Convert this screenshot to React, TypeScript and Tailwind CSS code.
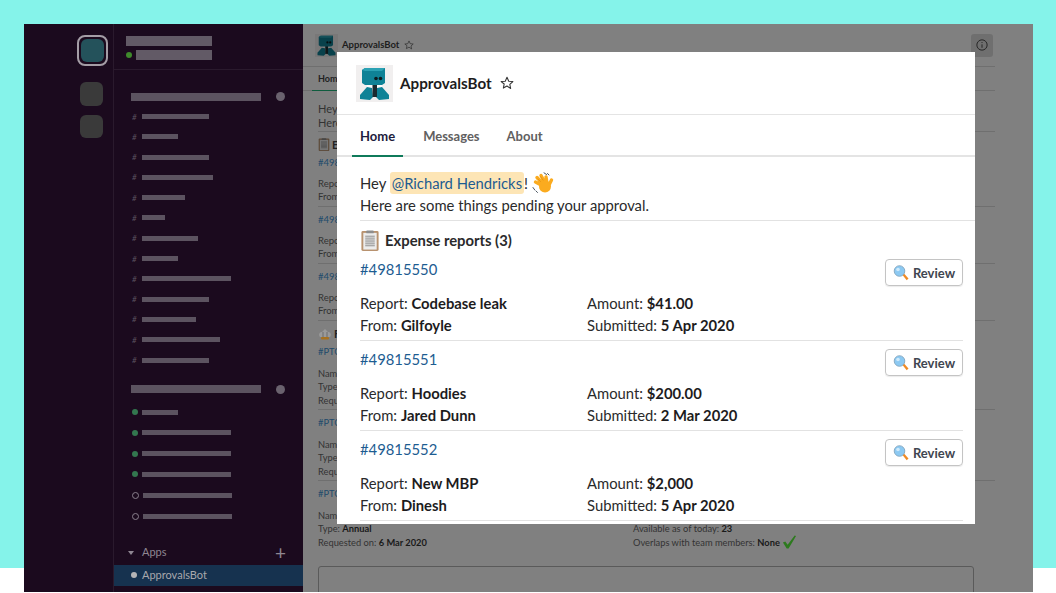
const channelWidths = [67, 36, 67, 71, 43, 23, 56, 36, 89, 67, 54, 78, 67]
const dmRows = [
  { width: 36, online: true },
  { width: 89, online: true },
  { width: 89, online: true },
  { width: 89, online: true },
  { width: 89, online: false },
  { width: 89, online: false },
]

const reports = [
  { id: "#49815550", report: "Codebase leak", from: "Gilfoyle", amount: "$41.00", date: "5 Apr 2020" },
  { id: "#49815551", report: "Hoodies", from: "Jared Dunn", amount: "$200.00", date: "2 Mar 2020" },
  { id: "#49815552", report: "New MBP", from: "Dinesh", amount: "$2,000", date: "5 Apr 2020" },
]

function BotAvatar({ className }: { className: string }) {
  return (
    <svg viewBox="0 0 37 37" className={className}>
      <rect width="37" height="37" fill="#f1efef" />
      <path d="M11 17h15v9H11z" fill="#fbfbfb" />
      <path d="M11 22l5 1 1 9-3 3-10-1 0-4z" fill="#0f8296" />
      <path d="M26 22l-5 1-1 9 3 3 10-1 0-4z" fill="#0f8296" />
      <rect x="16.500" y="18" width="4.500" height="14" fill="#1b2b30" />
      <path d="M6 5l3-2 20 0 0 15-3 2-17 0-3-2z" fill="#0f8296" />
      <path d="M6 5l3-2 20 0-3 3-17 0z" fill="#2ba2b4" />
      <circle cx="20" cy="13.500" r="1.800" fill="#0c1a1e" />
      <circle cx="24.500" cy="13.500" r="1.800" fill="#0c1a1e" />
    </svg>
  )
}

function Star({ className }: { className: string }) {
  return (
    <svg viewBox="0 0 16 16" fill="none" stroke="currentColor" strokeWidth="1.2" strokeLinejoin="round" className={className}>
      <path d="M8 1.500l2 4.400 4.700.5-3.500 3.200 1 4.700L8 11.400l-4.200 2.400 1-4.700L1.300 6.400l4.700-.5z" />
    </svg>
  )
}

function Clipboard({ className }: { className: string }) {
  return (
    <svg viewBox="0 0 20 22" className={className}>
      <rect x="1" y="1" width="18" height="21" rx="1.500" fill="#b8926f" />
      <rect x="3" y="3" width="14" height="17.500" fill="#ececec" />
      <rect x="6" y="0.500" width="8" height="3" rx="1" fill="#8d8d8d" />
      <path d="M5 6.500h10M5 8.500h10M5 10.500h10M5 12.500h10M5 14.500h10M5 16.500h10" stroke="#8a8a8a" strokeWidth="1" />
    </svg>
  )
}

function Crown({ className }: { className: string }) {
  return (
    <svg viewBox="0 0 14 14" className={className}>
      <path d="M2 10c-2-3 0-5 2-5l3-3 3 3c2 0 4 2 2 5z" fill="#9a9a9a" />
      <path d="M5 5v5M9 5v5" stroke="#6d6d6d" strokeWidth="1" />
      <rect x="3" y="10" width="8" height="2.500" rx="1" fill="#a8721f" />
    </svg>
  )
}

function WaveHand({ className }: { className: string }) {
  return (
    <svg viewBox="0 0 22 22" fill="none" strokeLinecap="round" className={className}>
      <g stroke="#fbab1f" strokeWidth="3.400">
        <path d="M11 14L3.500 10M11 12L5 5.500M13 11L9 3.500M15 11l-1-6M17 13l2.500-5" />
      </g>
      <circle cx="13" cy="14.500" r="6" fill="#fbab1f" />
      <path d="M8.500 9.500L6 7M11 8L8.500 4.500" stroke="#e08e10" strokeWidth="0.700" />
      <path d="M12 0.800l2.500 1.700M15.500 1.500l1.500 1.500M1 15.500l1.800 2.500M4 19l1.500 1.500" stroke="#4a5560" strokeWidth="1" />
    </svg>
  )
}

function Magnifier({ className }: { className: string }) {
  return (
    <svg viewBox="0 0 16 16" className={className}>
      <path d="M9.500 10l1.500-1.500 4.500 5-1.800 1.800z" fill="#f08a24" />
      <circle cx="6.500" cy="6" r="5.300" fill="#8cc9f2" stroke="#7d9fb8" strokeWidth="0.800" />
      <circle cx="5" cy="4.500" r="1.800" fill="#cfeafb" />
    </svg>
  )
}

function DimmedReportRows() {
  return (
    <>
      {[0, 1, 2].map((i) => (
        <div key={i} className="h-[57px] border-b border-[#6f6f6f] pt-[6px] text-[9.500px] leading-[13.500px] text-[#333]">
          <div className="text-[#1e4a6b]">#498</div>
          <div className="mt-[7px]">Repo</div>
          <div>From</div>
        </div>
      ))}
    </>
  )
}

function DimmedPtoRow() {
  return (
    <div className="h-[71px] border-b border-[#6f6f6f] pt-[6px] text-[9.300px] leading-[13.500px] text-[#333]">
      <div className="text-[#1e4a6b]">#PTO</div>
      <div className="mt-[8px]">Nam</div>
      <div>Type</div>
      <div>Requ</div>
    </div>
  )
}

export default function App() {
  return (
    <div className="relative h-[593px] w-[1056px] overflow-hidden bg-white font-['Lato','Liberation_Sans',sans-serif]">
      <div className="absolute inset-x-0 top-0 h-[568px] bg-[#85f3ea]" />

      {/* Slack window, dimmed */}
      <div className="relative ml-[24px] mt-[24px] flex h-[568px] w-[1009px]">
        <div className="flex w-[89px] shrink-0 flex-col items-end bg-[#1b0a1e] pr-[5px] pt-[11px]">
          <div className="rounded-[8px] border-2 border-[#a49da6] p-[2px]">
            <div className="h-[23px] w-[23px] rounded-[6px] bg-[#24525b]" />
          </div>
          <div className="mr-[5px] mt-[16px] h-[24px] w-[23px] rounded-[6px] bg-[#3a3a3a]" />
          <div className="mr-[5px] mt-[9px] h-[23px] w-[23px] rounded-[6px] bg-[#3a3a3a]" />
        </div>

        <aside className="flex w-[190px] shrink-0 flex-col overflow-hidden border-l border-[#2a1a2d] bg-[#1b0a1e]">
          <div className="h-[46px] shrink-0 border-b border-[#2a1a2d] pl-[12px] pt-[12px]">
            <div className="h-[10px] w-[86px] bg-[#625a66]" />
            <div className="mt-[4px] flex items-center gap-[4px]">
              <span className="h-[6px] w-[6px] rounded-full bg-[#3f8a2c]" />
              <div className="h-[10px] w-[76px] bg-[#625a66]" />
            </div>
          </div>

          <div className="mt-[22px] flex items-center pl-[17px]">
            <div className="h-[8px] w-[130px] bg-[#5c5360]" />
            <span className="ml-[15px] h-[9px] w-[9px] rounded-full bg-[#6a626e]" />
          </div>
          <div className="mt-[13px] flex flex-col gap-[15.300px] pl-[18px]">
            {channelWidths.map((w, i) => (
              <div key={i} className="flex h-[5px] items-center gap-[5px]">
                <span className="w-[5px] text-[8px] italic leading-none text-[#5c5360]">#</span>
                <div className="h-[5px] bg-[#5c5360]" style={{ width: w }} />
              </div>
            ))}
          </div>

          <div className="mt-[22px] flex items-center pl-[17px]">
            <div className="h-[8px] w-[130px] bg-[#5c5360]" />
            <span className="ml-[15px] h-[9px] w-[9px] rounded-full bg-[#6a626e]" />
          </div>
          <div className="mt-[16px] flex flex-col gap-[15.800px] pl-[18px]">
            {dmRows.map((row, i) => (
              <div key={i} className="flex h-[5px] items-center gap-[4px]">
                {row.online ? (
                  <span className="h-[6px] w-[6px] rounded-full bg-[#33774f]" />
                ) : (
                  <span className="h-[7px] w-[7px] rounded-full border border-[#8a808d]" />
                )}
                <div className="h-[5px] bg-[#5c5360]" style={{ width: row.width }} />
              </div>
            ))}
          </div>

          <div className="mt-[26px] flex h-[16px] items-center pl-[14px] pr-[17px] text-[11px] text-[#8f8792]">
            <span className="h-0 w-0 border-x-[3px] border-t-[4px] border-x-transparent border-t-[#8f8792]" />
            <span className="ml-[8px]">Apps</span>
            <span className="ml-auto text-[19px] font-normal leading-none">+</span>
          </div>
          <div className="mt-[4px] flex h-[21px] shrink-0 items-center bg-[#16324f] pl-[17px] text-[11px] text-[#a8a8ac]">
            <span className="h-[6px] w-[6px] rounded-full bg-[#b4b4b6]" />
            <span className="ml-[5px]">ApprovalsBot</span>
          </div>
        </aside>

        <main className="min-w-0 flex-1 overflow-hidden bg-[#808080]">
          <div className="w-[692px]">
            <div className="flex h-[43px] items-center justify-between border-b border-[#6f6f6f] pl-[12px] pr-[2px]">
              <div className="flex items-center gap-[4px]">
                <BotAvatar className="h-[23px] w-[23px] brightness-50" />
                <span className="text-[9.500px] font-bold text-[#1d1d1d]">ApprovalsBot</span>
                <Star className="ml-[1px] h-[10px] w-[10px] text-[#333]" />
              </div>
              <div className="flex h-[23px] w-[22px] items-center justify-center rounded-[3px] bg-[#6f6f6f]">
                <svg viewBox="0 0 14 14" fill="none" stroke="#222" strokeWidth="1.100" className="h-[12px] w-[12px]">
                  <circle cx="7" cy="7" r="6" />
                  <path d="M7 6.200v4M7 3.600v1.100" />
                </svg>
              </div>
            </div>

            <div className="flex h-[24px] border-b border-[#6f6f6f] pl-[9px]">
              <div className="h-[24px] border-b border-[#0f5c3e] px-[6px] pt-[5px] text-[9px] font-bold text-[#222]">Home</div>
            </div>

            <div className="pl-[15px]">
              <div className="h-[41px] border-b border-[#6f6f6f] pt-[11px] text-[11px] leading-[14px] text-[#333]">
                <div>Hey</div>
                <div>Here</div>
              </div>
              <div className="flex h-[18px] items-start gap-[2px] pt-[6px] text-[11px] font-bold leading-[14px] text-[#222]">
                <Clipboard className="h-[13px] w-[12px] brightness-50" />
                <span>E</span>
              </div>
              <DimmedReportRows />
              <div className="flex h-[18px] items-start gap-[2px] pt-[6px] text-[11px] font-bold leading-[14px] text-[#222]">
                <Crown className="h-[14px] w-[14px]" />
                <span>F</span>
              </div>
              <DimmedPtoRow />
              <DimmedPtoRow />
              <div className="h-[71px] pt-[6px] text-[9.300px] leading-[13.500px] text-[#333]">
                <div className="text-[#1e4a6b]">#PTO</div>
                <div className="mt-[8px]">Nam</div>
                <div className="flex">
                  <div className="w-[315px]">
                    Type: <b className="text-[#1a1a1a]">Annual</b>
                  </div>
                  <div>
                    Available as of today: <b className="text-[#1a1a1a]">23</b>
                  </div>
                </div>
                <div className="flex">
                  <div className="w-[315px]">
                    Requested on: <b className="text-[#1a1a1a]">6 Mar 2020</b>
                  </div>
                  <div className="flex h-[13.500px] items-center gap-[2px]">
                    <span>
                      Overlaps with team members: <b className="text-[#1a1a1a]">None</b>
                    </span>
                    <svg viewBox="0 0 16 16" className="h-[16px] w-[15px] shrink-0">
                      <path d="M1 8.500l2.500-1 2.500 3.500L13.500 1l1.500.5-8 13.500H5z" fill="#2d7a1e" />
                    </svg>
                  </div>
                </div>
              </div>
            </div>

            <div className="ml-[15px] mt-[14px] h-[60px] w-[656px] rounded-[3px] border border-[#5a5a5a]" />
          </div>
        </main>
      </div>

      {/* App home modal */}
      <div className="absolute left-[337px] top-[52px] h-[472px] w-[638px] overflow-hidden bg-white text-[14.800px] text-[#2a2a2b]">
        <div className="flex h-[63px] items-center border-b border-[#e4e4e4] pl-[19px]">
          <BotAvatar className="h-[37px] w-[37px]" />
          <span className="ml-[7px] text-[15.200px] font-bold text-[#1d1c1d]">ApprovalsBot</span>
          <Star className="ml-[8px] h-[14px] w-[14px] text-[#333]" />
        </div>

        <div className="flex h-[42px] border-b-2 border-[#e4e4e4] pl-[15px] text-[13px]">
          <div className="h-[42px] border-b-2 border-[#0f7a5a] px-[8px] pt-[12px] font-bold leading-[18px] text-[#1d1c3d]">Home</div>
          <div className="ml-[20px] pt-[12px] font-bold leading-[18px] text-[#616061]">Messages</div>
          <div className="ml-[27px] pt-[12px] font-bold leading-[18px] text-[#616061]">About</div>
        </div>

        <div className="pl-[23px]">
          <div className="h-[64px] border-b border-[#e2e2e2] pt-[15px] leading-[22px]">
            <div className="flex items-center">
              <span>Hey&nbsp;</span>
              <span className="rounded-[3px] bg-[#fde5b5] px-[2px] text-[#1d5c91]">@Richard Hendricks</span>
              <span>!&nbsp;</span>
              <WaveHand className="h-[22px] w-[22px]" />
            </div>
            <div>Here are some things pending your approval.</div>
          </div>

          <div className="h-[30px] pt-[8px]">
            <div className="flex h-[22px] items-center font-bold">
              <Clipboard className="h-[21px] w-[20px]" />
              <span className="ml-[5px]">Expense reports (3)</span>
            </div>
          </div>

          <div className="w-[603px]">
            {reports.map((r) => (
              <div key={r.id} className="h-[90px] border-b border-[#e2e2e2] pt-[7px] leading-[22px]">
                <div className="flex h-[23px] items-start justify-between">
                  <span className="text-[#1d5c91]">{r.id}</span>
                  <button className="mt-[1px] flex h-[27px] w-[78px] shrink-0 items-center justify-center gap-[4px] rounded-[4px] border border-[#c4c4c4] text-[13px] font-bold text-[#3f4650] shadow-[0_1px_1px_rgba(0,0,0,0.08)]">
                    <Magnifier className="h-[16px] w-[16px]" />
                    Review
                  </button>
                </div>
                <div className="mt-[11px] grid grid-cols-[227px_1fr]">
                  <div>
                    Report: <b className="text-[#1d1c1d]">{r.report}</b>
                  </div>
                  <div>
                    Amount: <b className="text-[#1d1c1d]">{r.amount}</b>
                  </div>
                  <div>
                    From: <b className="text-[#1d1c1d]">{r.from}</b>
                  </div>
                  <div>
                    Submitted: <b className="text-[#1d1c1d]">{r.date}</b>
                  </div>
                </div>
              </div>
            ))}
          </div>
        </div>
      </div>
    </div>
  )
}
